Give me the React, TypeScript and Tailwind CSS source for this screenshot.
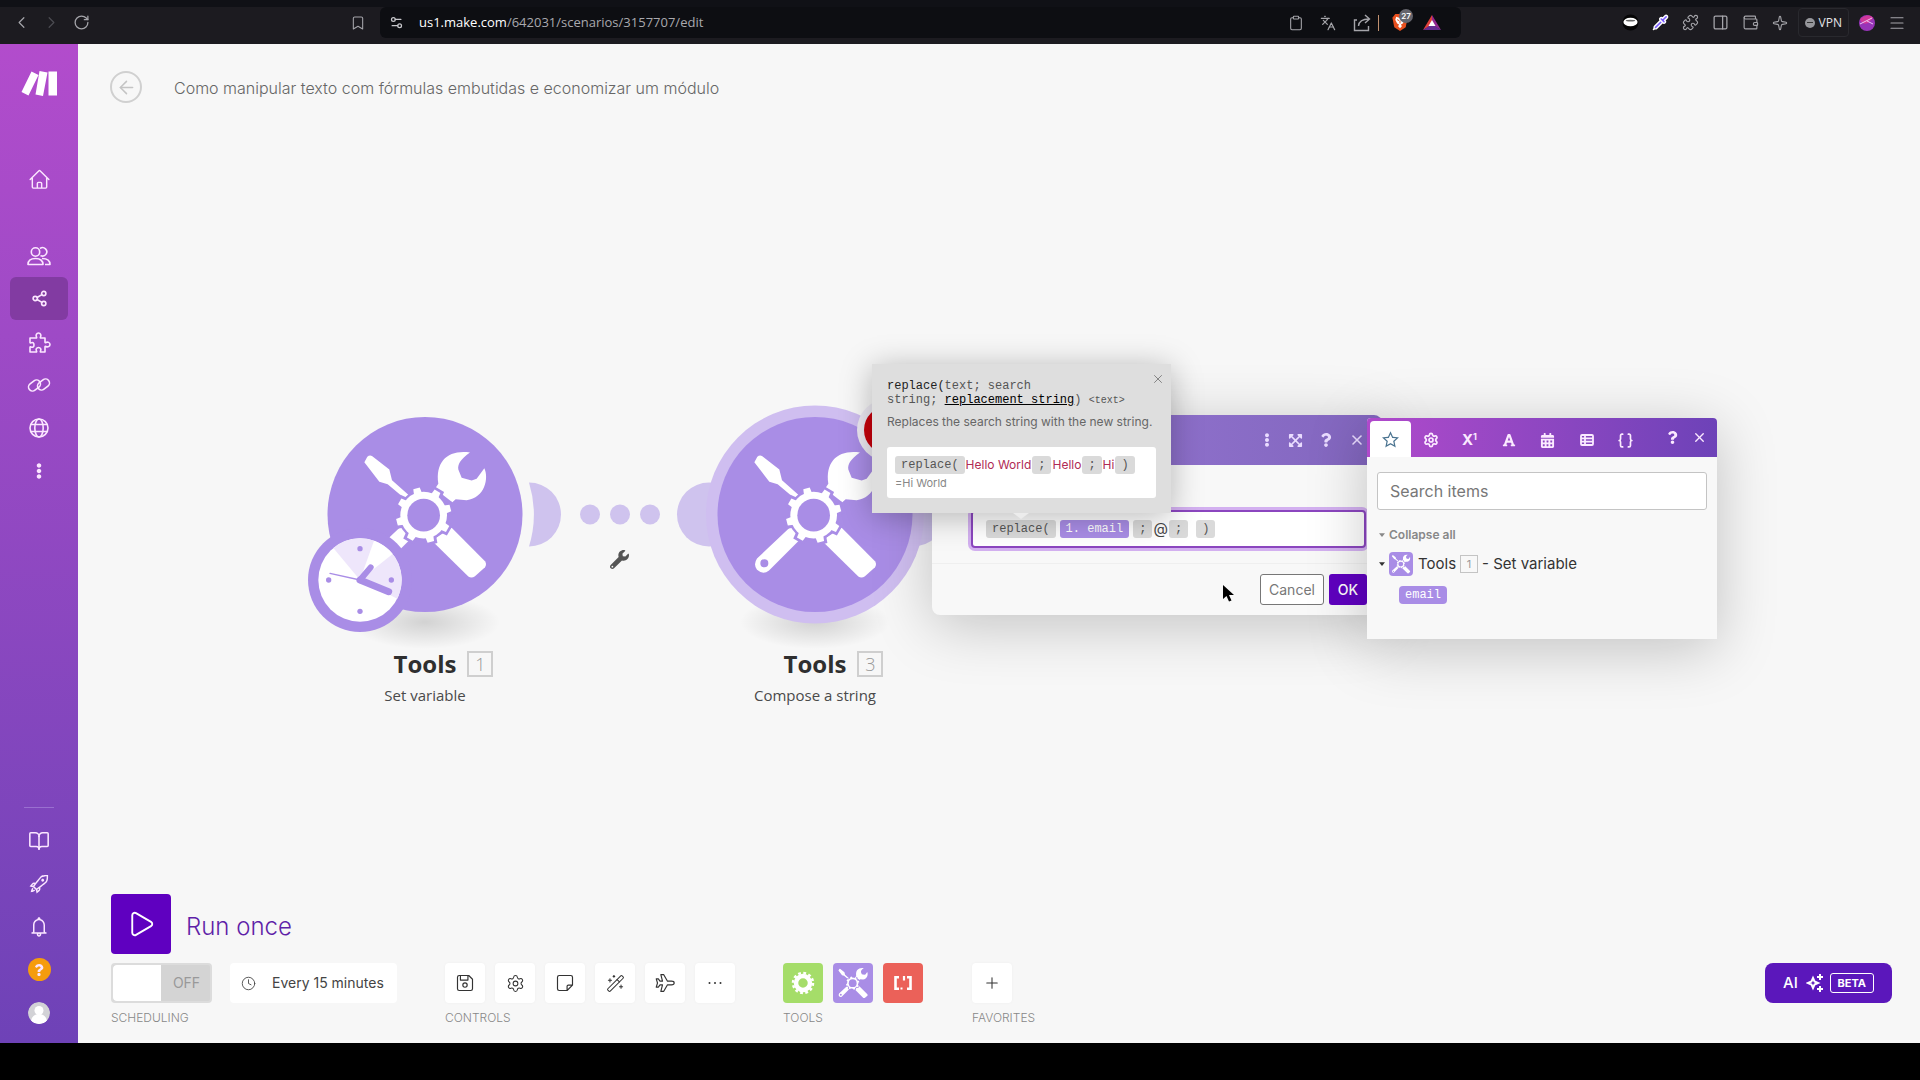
import React, { type ReactNode } from "react";
import {
  ArrowLeft, BookOpen, Bookmark, Braces, ChevronLeft, ChevronRight, Clipboard, Clock,
  Languages, Menu, PanelRight, Pipette, Play, Plus, Puzzle, RotateCw, Settings,
  Settings2, Share2, Sparkle, Wallet, WandSparkles, X,
} from "lucide-react";
import { FaCalendarAlt, FaEllipsisV, FaExpandArrowsAlt, FaFont, FaQuestion, FaWrench } from "react-icons/fa";
import { HiOutlineHome } from "react-icons/hi2";
import { LiaBell, LiaRocketSolid, LiaStar } from "react-icons/lia";

const TEETH = [0, 45, 90, 135, 180, 225, 270, 315];

function ToolsShape({ bg = "#a98de6" }: { bg?: string }) {
  return (
    <g fill="#fff">
      <path d="M-182-157-173-173Q-166-180-158-175L-107-135-99-103-50-59-60-47-112-91-137-98Z" />
      <path d="M135-186C105-165 98-150 100-135L110-110 140-102 155-107 178-139C192-110 180-50 125-43L92-46 82-37 30-77 40-92C30-160 70-195 135-186Z" />
      <path d="M80 40 180 140Q186 148 180 158L150 185Q140 192 130 186L20 78Z" />
      <path
        fillRule="evenodd"
        d="M-70 34-174 132Q-186 150-174 166-156 182-138 168L-42 72ZM-152 134a12 12 0 1 0 0 24 12 12 0 0 0 0-24Z"
      />
      <g transform="translate(-4 2)">
        <g stroke={bg} strokeWidth="18" fill={bg}>
          <circle r="68" />
          {TEETH.map((a) => (
            <path key={a} d="M-12-60-10-82H10L12-60Z" transform={`rotate(${a - 15})`} />
          ))}
        </g>
        <circle r="70" />
        {TEETH.map((a) => (
          <path key={a} d="M-13-60-10-83H10L13-60Z" transform={`rotate(${a - 15})`} />
        ))}
        <circle r="49" fill={bg} />
      </g>
    </g>
  );
}

function ToolsIcon({ className }: { className: string }) {
  return (
    <svg viewBox="-200 -200 400 400" className={className} aria-hidden="true">
      <ToolsShape />
    </svg>
  );
}

function Mono({ children }: { children: ReactNode }) {
  return (
    <span className="inline-flex h-[18px] items-center whitespace-pre rounded-[3px] bg-[#dadada] px-1.5 font-['Liberation_Mono',monospace] text-xs text-[#555]">
      {children}
    </span>
  );
}

function TopBar() {
  return (
    <header className="flex h-11 shrink-0 items-center border-t-[7px] border-[#101116] bg-[#1c1b20] pb-1.5 text-[#a5a5aa]">
      <nav aria-label="Browser" className="flex items-center pl-3">
        <button aria-label="Back" className="w-[30px]"><ChevronLeft size={19} strokeWidth={1.5} /></button>
        <button aria-label="Forward" className="w-[31px] text-[#4c4c52]"><ChevronRight size={19} strokeWidth={1.5} /></button>
        <button aria-label="Reload"><RotateCw size={17} strokeWidth={1.8} /></button>
      </nav>
      <button aria-label="Bookmark" className="ml-[260px]"><Bookmark size={16} strokeWidth={1.6} /></button>
      <div className="ml-3.5 flex h-[31px] w-[1081px] items-center rounded-md bg-[#0d0e12] pl-[9px]">
        <Settings2 size={15} className="text-[#c8c8cc]" />
        <a href="#edit" className="ml-[15px] font-['Open_Sans',sans-serif] text-[13px] text-[#a9a9ae]">
          <span className="text-white">us1.make.com</span>/642031/scenarios/3157707/edit
        </a>
        <div className="ml-auto flex items-center">
          <Clipboard size={16} strokeWidth={1.6} />
          <Languages size={16} strokeWidth={1.8} className="ml-4" />
          <svg viewBox="0 0 18 18" className="ml-[17px] size-[18px] fill-none stroke-current stroke-[1.4]" aria-hidden="true">
            <path d="M4 6H1.500v10.500h14V12M5.500 12c.5-5 4-7 10.500-7M12 1l4.500 4-4.500 4" />
          </svg>
          <span className="ml-[7px] h-4 w-px bg-[#c0906f]" />
          <span className="relative ml-3 block h-[19px] w-[18px]">
            <svg viewBox="0 0 18 20" className="size-full" aria-hidden="true">
              <path d="M4 1h10l3 4-2 10-6 4-6-4L1 5Z" fill="#e8501f" />
              <path d="M5 4l3 1h2l3-1 1 3-2 4-2 1 1 2-2 2-2-2 1-2-2-1-2-4Z" fill="#fff" />
              <path d="M6 7l2 1M12 7l-2 1M9 8v3" stroke="#e8501f" />
            </svg>
            <span className="absolute -top-1 left-2 flex size-3.5 items-center justify-center rounded-full bg-[#65656d] font-['Inter',sans-serif] text-[8px] font-semibold text-white">27</span>
          </span>
          <svg viewBox="0 0 18 16" className="mr-5 ml-3.5 size-[18px]" aria-hidden="true">
            <path d="M9 0 0 15 9 10Z" fill="#e0403a" />
            <path d="M9 0l9 15-9-5Z" fill="#92278f" />
            <path d="M0 15h18L9 9Z" fill="#662d91" />
            <path d="M9 5l3.500 6h-7Z" fill="#fff" />
          </svg>
        </div>
      </div>
      <div className="ml-auto flex items-center pr-3.5">
        <div className="flex items-center gap-[13px]">
          <svg viewBox="0 0 18 18" className="size-[17px]" aria-hidden="true">
            <circle cx="9" cy="9" r="8.500" fill="#050505" />
            <ellipse cx="9" cy="8.500" rx="7.500" ry="4.500" fill="#fff" />
            <ellipse cx="9" cy="7" rx="5" ry="1" fill="#666" />
          </svg>
          <Pipette size={17} className="fill-[#7a5cff] text-white" />
          <Puzzle size={17} strokeWidth={1.6} />
          <PanelRight size={17} strokeWidth={1.8} />
          <Wallet size={17} strokeWidth={1.6} />
          <Sparkle size={16} strokeWidth={1.6} />
        </div>
        <button className="ml-2.5 flex h-[29px] items-center gap-1 rounded border border-[#29292e] px-1.5 font-['Open_Sans',sans-serif] text-xs font-medium text-[#e4e4e8]">
          <span className="flex size-2.5 items-center justify-center rounded-full bg-[#96969b]"><span className="h-px w-1.5 bg-[#333]" /></span>
          VPN
        </button>
        <svg viewBox="0 0 16 16" className="ml-2.5 size-4" aria-hidden="true">
          <circle cx="8" cy="8" r="8" fill="#9734b8" />
          <path d="M1 4c6-5 12-4 13-1L9 8C6 10 2 8 1 4Z" fill="#d0389a" />
          <path d="M1 9l12-6M8 6l6 3" stroke="#ecc4f4" />
        </svg>
        <button aria-label="Menu" className="ml-[13px]"><Menu size={18} strokeWidth={1.5} /></button>
      </div>
    </header>
  );
}

function LineIcon({ children }: { children: ReactNode }) {
  return (
    <svg viewBox="0 0 24 24" className="size-6 fill-none stroke-current stroke-[1.6]" strokeLinejoin="round" aria-hidden="true">
      {children}
    </svg>
  );
}

function NavItem({ label, active, children }: { label: string; active?: boolean; children: ReactNode }) {
  return (
    <a
      href="#nav"
      aria-label={label}
      className={
        active
          ? "flex h-[43px] w-[58px] items-center justify-center rounded-md bg-[#823ba2]"
          : "flex h-[43px] w-[58px] items-center justify-center"
      }
    >
      {children}
    </a>
  );
}

function Sidebar() {
  return (
    <nav aria-label="Main" className="flex w-[78px] shrink-0 flex-col items-center bg-linear-to-b from-[#b24ccc] to-[#6e42b7] pb-[9px] text-[#fbe6ff]">
      <svg viewBox="0 0 36 25" className="mt-[27px] h-[25px] w-9 fill-white" aria-label="Make">
        <path d="M10.500.5 17.500 4 7.500 24.500.5 21ZM18.500 0l8 1.500L22 25l-7.500-1.500ZM27.500.5H36v24h-8.500Z" />
      </svg>
      <div className="mt-[62px]"><NavItem label="Home"><HiOutlineHome size={23} /></NavItem></div>
      <div className="mt-[33px]">
        <NavItem label="Team">
          <LineIcon>
            <circle cx="8.500" cy="8" r="4.200" />
            <path d="M13 4.500a4.200 4.200 0 1 1 .5 7M1 20.500c0-4 3-6 7.500-6s7.500 2 7.500 6ZM15 14.500c5 0 8 2 8 6h-5" />
          </LineIcon>
        </NavItem>
        <NavItem label="Scenarios" active><Share2 size={17} strokeWidth={2.3} /></NavItem>
        <NavItem label="Templates">
          <LineIcon>
            <path d="M3 8h6.200c.5 0 .6-.5.3-1C8.500 5.500 9.500 3 11.500 3s3 2.500 2 4c-.3.5-.2 1 .3 1H18v4.200c0 .5.500.6 1 .3 1.500-1 4 0 4 2s-2.500 3-4 2c-.5-.3-1-.2-1 .3V22h-4.200c-.5 0-.6-.5-.3-1 1-1.500 0-3.500-2-3.500s-3 2-2 3.500c.3.500.2 1-.3 1H3v-4.800c0-.5.500-.6 1-.3 1.500 1 3 0 3-2s-1.500-3-3-2c-.5.300-1 .2-1-.3Z" />
          </LineIcon>
        </NavItem>
        <NavItem label="Connections">
          <LineIcon>
            <rect x="1" y="8.500" width="13" height="8" rx="4" transform="rotate(-38 7.500 12.500)" />
            <rect x="10" y="7.500" width="13" height="8" rx="4" transform="rotate(-38 16.500 11.500)" />
          </LineIcon>
        </NavItem>
        <NavItem label="Webhooks">
          <LineIcon>
            <circle cx="12" cy="12" r="9" />
            <ellipse cx="12" cy="12" rx="4.200" ry="9" />
            <path d="M4 8.500h16M4 15.500h16" />
          </LineIcon>
        </NavItem>
        <NavItem label="More"><FaEllipsisV size={16} /></NavItem>
      </div>
      <div className="mt-auto flex flex-col items-center">
        <span className="mb-[11px] h-px w-[30px] bg-[#9a6fd0]" />
        <NavItem label="Docs"><BookOpen size={22} strokeWidth={1.7} /></NavItem>
        <NavItem label="What's new"><LiaRocketSolid size={23} /></NavItem>
        <NavItem label="Notifications"><LiaBell size={24} /></NavItem>
        <NavItem label="Help">
          <span className="flex size-[23px] items-center justify-center rounded-full bg-[#f59c0d]"><FaQuestion size={12} /></span>
        </NavItem>
        <NavItem label="Profile">
          <svg viewBox="0 0 22 22" className="size-[22px] rounded-full" aria-hidden="true">
            <circle cx="11" cy="11" r="11" fill="#d2d2d6" />
            <circle cx="11" cy="8.500" r="4.500" fill="#fff" />
            <path d="M3 19c1-5 4-7 8-7s7 2 8 7c-4 4-12 4-16 0Z" fill="#fff" />
          </svg>
        </NavItem>
      </div>
    </nav>
  );
}

function ModuleLabel({ name, id, action }: { name: string; id: string; action: string }) {
  return (
    <div className="text-center font-['Open_Sans',sans-serif]">
      <h2 className="text-2xl leading-[30px] font-bold text-[#2f2f2f]">
        <span className="relative">
          {name}
          <span className="absolute top-1 left-full ml-[11px] flex size-[26px] items-center justify-center border-2 border-[#cfcfcf] text-lg font-light text-[#999]">{id}</span>
        </span>
      </h2>
      <p className="mt-1 text-[15px] leading-6 text-[#4a4a4a]">{action}</p>
    </div>
  );
}

function Shadow({ id }: { id: string }) {
  return (
    <>
      <radialGradient id={id}>
        <stop offset="0" stopColor="#000" stopOpacity=".15" />
        <stop offset="1" stopColor="#000" stopOpacity="0" />
      </radialGradient>
      <ellipse cx="130" cy="237" rx="75" ry="27" fill={`url(#${id})`} />
    </>
  );
}

function Flow() {
  return (
    <div>
      <svg viewBox="0 0 210 90" className="absolute top-[425px] left-[451px] h-[90px] w-[210px]" aria-hidden="true">
        <path d="M0 13.500A32 32 0 1 1 0 77.500 109 109 0 0 0 0 13.500Z" fill="#cfc3ee" />
        <circle cx="61" cy="45.500" r="10" fill="#cfc3ee" />
        <circle cx="91" cy="45.500" r="10" fill="#cfc3ee" />
        <circle cx="121" cy="45.500" r="10" fill="#cfc3ee" />
        <circle cx="180" cy="45.500" r="32" fill="#cfc3ee" />
      </svg>
      <FaWrench size={19} className="absolute top-[506px] left-[532px] text-[#555]" />

      <article className="absolute top-[341px] left-[217px] w-[260px]">
        <svg viewBox="0 0 260 264" className="h-[264px] w-[260px]" aria-hidden="true">
          <Shadow id="shadow-a" />
          <circle cx="130" cy="129.500" r="97.500" fill="#a98de6" />
          <g transform="translate(130 129.500) scale(.3333)"><ToolsShape /></g>
          <g transform="translate(65 195) scale(.3333)">
            <circle r="156" fill="#a98de6" />
            <circle r="125" fill="#fff" />
            <path d="M0 0-80-96A125 125 0 0 1 112 56Z" fill="#eee6fb" />
            <path d="M0 0 42-118A125 125 0 0 1 98-78Z" fill="#fff" />
            <g fill="#a98de6">
              <circle cy="-94" r="8" /><circle cx="94" r="8" /><circle cy="94" r="8" /><circle cx="-94" r="8" />
            </g>
            <g stroke="#a98de6" strokeLinecap="round">
              <path d="M0 0 86 35" strokeWidth="21" />
              <path d="M0 0 32-38" strokeWidth="18" />
              <path d="M0 0-90-20" strokeWidth="4" />
            </g>
          </g>
        </svg>
        <ModuleLabel name="Tools" id="1" action="Set variable" />
      </article>

      <article className="absolute top-[341px] left-[607px] w-[260px]">
        <svg viewBox="0 0 260 264" className="h-[264px] w-[260px]" aria-hidden="true">
          <Shadow id="shadow-b" />
          <circle cx="228" cy="129.500" r="32" fill="#cfc3ee" />
          <circle cx="130" cy="129.500" r="109" fill="#cfbef0" />
          <circle cx="130" cy="129.500" r="97.500" fill="#a98de6" />
          <g transform="translate(130 129.500) scale(.3333)"><ToolsShape /></g>
          <circle cx="203" cy="45" r="31" fill="#ece9f2" />
          <circle cx="203" cy="45" r="24" fill="#c8000c" />
        </svg>
        <ModuleLabel name="Tools" id="3" action="Compose a string" />
      </article>
    </div>
  );
}

function ModuleDialog() {
  return (
    <section role="dialog" aria-label="Compose a string" className="absolute top-[371px] left-[854px] w-[450px] rounded-lg bg-[#f8f8f8] shadow-[0_10px_60px_rgba(0,0,0,0.22)]">
      <header className="flex h-[50px] items-center justify-end gap-3.5 rounded-t-lg bg-linear-to-r from-[#9a7ad8] to-[#8266be] pr-[17px] text-[#eadcff]">
        <button aria-label="More"><FaEllipsisV size={14} /></button>
        <button aria-label="Expand"><FaExpandArrowsAlt size={15} /></button>
        <button aria-label="Help" className="px-0.5"><FaQuestion size={14} /></button>
        <button aria-label="Close"><X size={16} strokeWidth={2.4} /></button>
      </header>
      <div className="border-b border-[#efefef] px-4 pt-[45px] pb-[15px]">
        <div
          role="textbox"
          aria-label="Text"
          className="ml-[23px] flex h-[38px] items-center rounded border-2 border-[#8b46bf] bg-white pl-[13px] ring-3 ring-[#d3b0f0]"
        >
          <Mono>replace(</Mono>
          <span className="ml-1 flex h-[18px] items-center rounded-[3px] bg-[#a98de6] px-1.5 font-['Liberation_Mono',monospace] text-xs text-white">1. email</span>
          <span className="ml-1 flex items-center"><Mono>;</Mono></span>
          <span className="mx-px font-['Inter',sans-serif] text-[15px] text-[#444]">@</span>
          <Mono>;</Mono>
          <span className="ml-2 flex items-center"><Mono>)</Mono></span>
        </div>
      </div>
      <footer className="flex h-[51px] items-start justify-end gap-[5px] pt-2.5 pr-[15px] font-['Inter',sans-serif] text-sm">
        <button className="h-[31px] w-16 rounded-[3px] border border-[#777] bg-white text-[#777]">Cancel</button>
        <button className="h-[31px] w-[38px] rounded-[3px] bg-[#5f00c0] font-medium text-white">OK</button>
      </footer>
    </section>
  );
}

function FunctionTooltip() {
  return (
    <aside role="tooltip" className="absolute top-[320px] left-[794px] w-[299px] bg-[#dedede] px-[15px] pt-[15px] pb-[15px] shadow-[0_4px_30px_rgba(0,0,0,0.28)]">
      <button aria-label="Dismiss" className="absolute top-2 right-[6px] text-[#777]"><X size={14} strokeWidth={1.5} /></button>
      <p className="font-['Liberation_Mono',monospace] text-xs leading-[14px] text-[#555]">
        <span className="text-[#222]">replace(</span>text; search
        <br />
        string; <span className="text-black underline">replacement string</span>) <span className="text-[10px]">&lt;text&gt;</span>
      </p>
      <p className="mt-1.5 font-['Inter',sans-serif] text-xs leading-4 whitespace-nowrap text-[#666]">Replaces the search string with the new string.</p>
      <div className="mt-[17px] h-[51px] rounded-[3px] bg-white px-2 pt-[9px] font-['Inter',sans-serif] text-xs">
        <div className="flex items-center gap-px whitespace-nowrap text-[#b02a55]">
          <Mono>replace(</Mono>Hello World<Mono>;</Mono>Hello<Mono>;</Mono>Hi<Mono>)</Mono>
        </div>
        <p className="text-[11px] leading-[18px] text-[#888]">=Hi World</p>
      </div>
      <svg viewBox="0 0 16 6" className="absolute top-full left-[141px] h-1.5 w-4 fill-[#ececec]" aria-hidden="true">
        <path d="M0 0h16L8 6Z" />
      </svg>
    </aside>
  );
}

function TabButton({ label, children }: { label: string; children: ReactNode }) {
  return <button aria-label={label} className="flex w-[39px] items-center justify-center">{children}</button>;
}

function ItemPanel() {
  return (
    <section aria-label="Mapping panel" className="absolute top-[374px] left-[1289px] h-[221px] w-[350px] rounded-t bg-[#f8f8f8] font-['Inter',sans-serif] shadow-[0_10px_60px_rgba(0,0,0,0.22)]">
      <header className="flex h-[39px] rounded-t bg-linear-to-r from-[#b049cb] to-[#6d42b8] pl-[3px] text-[#fbeaff]">
        <button aria-label="Favorites" className="mt-[3px] flex w-[41px] items-center justify-center rounded-t bg-white text-[#4a7390]"><LiaStar size={19} /></button>
        <div className="flex pt-[5px]">
          <TabButton label="Variables"><Settings size={16} strokeWidth={2.6} /></TabButton>
          <TabButton label="Math functions"><span className="text-[15px] font-bold">X<sup className="text-[9px]">1</sup></span></TabButton>
          <TabButton label="Text functions"><FaFont size={14} /></TabButton>
          <TabButton label="Date functions"><FaCalendarAlt size={15} /></TabButton>
          <TabButton label="Array functions">
            <svg viewBox="0 0 14 12" className="h-3 w-3.5 fill-none stroke-current stroke-[1.8]" aria-hidden="true">
              <rect x="1" y="1" width="12" height="10" rx="1" />
              <path d="M1 4.300h12M1 7.700h12M5 1v10" />
            </svg>
          </TabButton>
          <TabButton label="Custom functions"><Braces size={17} strokeWidth={2.4} /></TabButton>
        </div>
        <button aria-label="Help" className="ml-auto flex w-6 items-center justify-center"><FaQuestion size={13} /></button>
        <button aria-label="Close" className="mr-1.5 ml-[3px] flex w-6 items-center justify-center"><X size={15} strokeWidth={2.2} /></button>
      </header>
      <div className="px-2.5 pt-[15px]">
        <input aria-label="Search items" placeholder="Search items" className="block h-[38px] w-full rounded-[3px] border border-[#c4c4c4] bg-white px-3 text-base placeholder:text-[#777]" />
        <button className="mt-[17px] flex items-center gap-1 text-xs font-semibold text-[#888]">
          <svg viewBox="0 0 8 5" className="ml-0.5 h-1 w-1.5 fill-current" aria-hidden="true"><path d="M0 0h8L4 5Z" /></svg>
          Collapse all
        </button>
        <div className="mt-[9px] flex items-center text-[15px] text-[#333]">
          <svg viewBox="0 0 8 5" className="mr-1 ml-0.5 h-1 w-1.5 fill-current" aria-hidden="true"><path d="M0 0h8L4 5Z" /></svg>
          <span className="rounded-sm bg-[#a98de6]"><ToolsIcon className="size-6 p-0.5" /></span>
          <span className="ml-[5px]">Tools</span>
          <span className="mx-1 flex size-[18px] items-center justify-center border border-[#c4c4c4] text-[11px] text-[#999]">1</span>
          <span>- Set variable</span>
        </div>
        <button className="mt-2.5 ml-[22px] block h-[18px] rounded-sm bg-[#a98de6] px-1.5 font-['Liberation_Mono',monospace] text-xs text-white">email</button>
      </div>
    </section>
  );
}

function ToolButton({ label, children }: { label: string; children: ReactNode }) {
  return (
    <button aria-label={label} className="flex size-10 items-center justify-center rounded-sm bg-white text-[#333] shadow-[0_0_3px_rgba(0,0,0,0.04)]">
      {children}
    </button>
  );
}

function ThinIcon({ children }: { children: ReactNode }) {
  return (
    <svg viewBox="0 0 24 24" className="size-5 fill-none stroke-current stroke-[1.4]" strokeLinejoin="round" aria-hidden="true">
      {children}
    </svg>
  );
}

function Group({ label, className, children }: { label: string; className: string; children: ReactNode }) {
  return (
    <div className={className}>
      <div className="flex gap-2.5">{children}</div>
      <p className="mt-[7px] text-xs leading-4 font-light text-[#888]">{label}</p>
    </div>
  );
}

function BottomBar() {
  return (
    <footer className="mt-auto flex items-end pr-7 pb-[17px] pl-[33px] font-['Inter',sans-serif]">
      <div className="w-[334px]">
        <button className="flex items-center gap-[15px] text-2xl font-light text-[#5f1fa8]">
          <span className="flex size-[60px] items-center justify-center rounded bg-[#5f00c0]">
            <Play size={30} strokeWidth={1.5} className="text-white" />
          </span>
          <span className="pt-1.5">Run once</span>
        </button>
        <Group label="SCHEDULING" className="mt-[9px]">
          <label className="mr-2 flex h-10 w-[101px] items-center rounded border-2 border-[#dcdcdc] bg-[#d4d4d4] text-sm text-[#999]">
            <input type="checkbox" className="sr-only" aria-label="Scheduling" />
            <span className="h-full w-12 rounded-l-sm bg-white" />
            <span className="flex-1 pl-0.5 text-center">OFF</span>
          </label>
          <button className="flex h-10 w-[167px] items-center rounded-sm bg-white pl-[11px] text-sm text-[#444]">
            <Clock size={15} strokeWidth={1.4} />
            <span className="ml-4 whitespace-nowrap">Every 15 minutes</span>
          </button>
        </Group>
      </div>
      <Group label="CONTROLS" className="w-[338px]">
        <ToolButton label="Save">
          <ThinIcon>
            <path d="M3 5a2 2 0 0 1 2-2h11.500L21 7.500V19a2 2 0 0 1-2 2H5a2 2 0 0 1-2-2ZM6.500 3v5.500h9V3" />
            <circle cx="12" cy="14.500" r="2.600" />
          </ThinIcon>
        </ToolButton>
        <ToolButton label="Settings"><Settings size={19} strokeWidth={1.3} /></ToolButton>
        <ToolButton label="Notes">
          <ThinIcon><path d="M21 14.500V5a2 2 0 0 0-2-2H5a2 2 0 0 0-2 2v14a2 2 0 0 0 2 2h9.500ZM14.500 21v-5a1.500 1.500 0 0 1 1.500-1.500h5" /></ThinIcon>
        </ToolButton>
        <ToolButton label="Auto-align"><WandSparkles size={19} strokeWidth={1.3} /></ToolButton>
        <ToolButton label="Explain flow">
          <ThinIcon><path d="M23 12c0-1.200-1.500-2.200-3.200-2.200H15L10.500 2H7l2 7.800H6L4 7H1.500L3 12l-1.500 5H4l2-2.800h3L7 22h3.500l4.500-7.800h4.800c1.700 0 3.200-1 3.200-2.200Z" /></ThinIcon>
        </ToolButton>
        <ToolButton label="More">
          <svg viewBox="0 0 14 4" className="h-1 w-3.5 fill-current" aria-hidden="true">
            <circle cx="1.500" cy="2" r="1" /><circle cx="7" cy="2" r="1" /><circle cx="12.500" cy="2" r="1" />
          </svg>
        </ToolButton>
      </Group>
      <Group label="TOOLS" className="w-[189px]">
        <button aria-label="Flow control" className="flex size-10 items-center justify-center rounded bg-[#a5dd69]">
          <svg viewBox="-12 -12 24 24" className="size-6" aria-hidden="true">
            <circle r="7" fill="none" stroke="#fff" strokeWidth="4.500" />
            <circle r="10" fill="none" stroke="#fff" strokeWidth="2.500" strokeDasharray="2.800 2.436" />
          </svg>
        </button>
        <button aria-label="Tools" className="flex size-10 items-center justify-center rounded bg-[#a98de6]"><ToolsIcon className="size-8" /></button>
        <button aria-label="Text parser" className="flex size-10 items-center justify-center rounded bg-[#eb6159]">
          <svg viewBox="0 0 20 16" className="h-4 w-5 fill-none stroke-white stroke-[2.6]" aria-hidden="true">
            <path d="M6 2.300H2.500v11.400H6M14 2.300h3.500v11.400H14" />
            <path d="M7.500 13.500h2M11 1v4.500" strokeWidth="2.200" />
          </svg>
        </button>
      </Group>
      <Group label="FAVORITES" className="">
        <ToolButton label="Add favorite"><Plus size={18} strokeWidth={1.4} /></ToolButton>
      </Group>
      <button className="mb-[23px] ml-auto flex h-10 w-[127px] items-center rounded-lg bg-[#5b17bb] pl-[18px] text-[15px] font-medium text-white">
        AI
        <svg viewBox="0 0 18 18" className="ml-2 size-[18px] fill-none stroke-current stroke-2" aria-hidden="true">
          <path d="M7 4l1.500 3.500L12 9l-3.500 1.500L7 14l-1.500-3.500L2 9l3.500-1.500ZM14 0v6M11 3h6M14 12v6M11 15h6" />
        </svg>
        <span className="ml-1.5 flex h-5 w-11 items-center justify-center rounded-[3px] border border-white text-[11px] font-bold">BETA</span>
      </button>
    </footer>
  );
}

export default function App() {
  return (
    <div className="flex h-screen flex-col overflow-hidden bg-black">
      <TopBar />
      <div className="flex min-h-0 flex-1">
        <Sidebar />
        <main className="relative flex min-w-0 flex-1 flex-col overflow-hidden bg-[#f7f7f7]">
          <div className="flex items-center gap-8 pt-[27px] pl-8 font-['Inter',sans-serif]">
            <button aria-label="Back" className="flex size-8 items-center justify-center rounded-full border-2 border-[#d0d0d0] text-[#c4c4c4]">
              <ArrowLeft size={21} strokeWidth={1.7} />
            </button>
            <h1 className="pt-0.5 text-base font-light text-[#666]">Como manipular texto com fórmulas embutidas e economizar um módulo</h1>
          </div>
          <Flow />
          <ModuleDialog />
          <ItemPanel />
          <FunctionTooltip />
          <svg viewBox="0 0 12 18" className="absolute top-[541px] left-[1145px] h-[18px] w-3" aria-hidden="true">
            <path d="M0 0v14l3.500-3 2.500 5.500 2.500-1L6 10h5Z" fill="#000" />
          </svg>
          <BottomBar />
        </main>
      </div>
      <div className="h-[37px] shrink-0" />
    </div>
  );
}
